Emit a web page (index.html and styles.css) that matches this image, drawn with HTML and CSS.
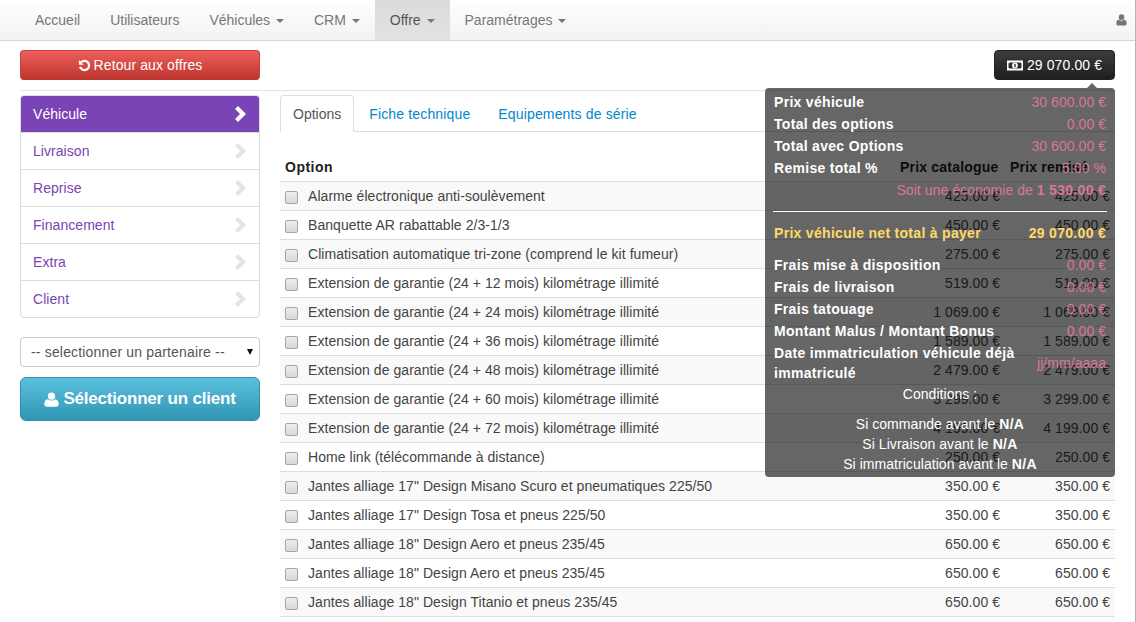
FILE: index.html
```html
<!DOCTYPE html>
<html lang="fr">
<head>
<meta charset="utf-8">
<title>Offre</title>
<link rel="stylesheet" href="styles.css">
</head>
<body>
<nav class="navbar">
  <ul class="nav-links">
    <li><a>Accueil</a></li>
    <li><a>Utilisateurs</a></li>
    <li><a>Véhicules <i class="caret"></i></a></li>
    <li><a>CRM <i class="caret"></i></a></li>
    <li class="active"><a>Offre <i class="caret"></i></a></li>
    <li><a>Paramétrages <i class="caret"></i></a></li>
  </ul>
  <svg class="user-icon" viewBox="0 0 12 13" width="11" height="12"><path fill="#777" d="M6 0.3a3 3 0 0 1 3 3.1 3 3 0 0 1-3 3.1 3 3 0 0 1-3-3.1 3 3 0 0 1 3-3.1zM3.2 6.3c.8.6 1.7 1 2.8 1s2-.4 2.8-1c1.9.1 2.9 1.7 2.9 4 0 1.4-.9 2.3-2.1 2.3H2.400c-1.200 0-2.100-.9-2.100-2.300 0-2.300 1-3.900 2.900-4z"/></svg>
</nav>
<main class="page">
  <div class="topbar">
    <a class="btn btn-red">
      <svg class="undo" viewBox="0 0 14 14" width="13" height="13"><path fill="none" stroke="#fff" stroke-width="2.400" d="M3.200 3.600A5 5 0 1 1 2.200 8.500"/><path fill="#fff" d="M1 1.200v5h5z"/></svg>
      Retour aux offres</a>
    <a class="btn btn-dark">
      <svg viewBox="0 0 16 11" width="16" height="11"><path fill="#fff" fill-rule="evenodd" d="M0 .5h16v10H0zM2.500 2.500 1.500 3.500v4l1 1h11l1-1v-4l-1-1z"/><circle cx="8" cy="5.500" r="2.900" fill="#fff"/><rect x="7.400" y="3.800" width="1.300" height="3.500" fill="#222"/></svg>
      29 070.00 €</a>
  </div>
  <hr class="rule">
  <div class="columns">
    <aside class="sidebar">
      <ul class="steps">
        <li class="on"><span>Véhicule</span><svg class="chev" viewBox="0 0 12 18" width="12" height="18"><path d="M2.500 2.500l6.500 6.500-6.500 6.500"/></svg></li>
        <li><span>Livraison</span><svg class="chev" viewBox="0 0 12 18" width="12" height="18"><path d="M2.500 2.500l6.500 6.500-6.500 6.500"/></svg></li>
        <li><span>Reprise</span><svg class="chev" viewBox="0 0 12 18" width="12" height="18"><path d="M2.500 2.500l6.500 6.500-6.500 6.500"/></svg></li>
        <li><span>Financement</span><svg class="chev" viewBox="0 0 12 18" width="12" height="18"><path d="M2.500 2.500l6.500 6.500-6.500 6.500"/></svg></li>
        <li><span>Extra</span><svg class="chev" viewBox="0 0 12 18" width="12" height="18"><path d="M2.500 2.500l6.500 6.500-6.500 6.500"/></svg></li>
        <li><span>Client</span><svg class="chev" viewBox="0 0 12 18" width="12" height="18"><path d="M2.500 2.500l6.500 6.500-6.500 6.500"/></svg></li>
      </ul>
      <div class="select"><span>-- selectionner un partenaire --</span><i class="select-arrow"></i></div>
      <a class="btn-client">
        <svg viewBox="0 0 15 15" width="15" height="15"><path fill="#fff" d="M7.500.6a3.600 3.600 0 0 1 3.600 3.600 3.600 3.600 0 0 1-7.200 0A3.600 3.600 0 0 1 7.500.6zM3.800 7.300c1 .8 2.300 1.200 3.700 1.200s2.700-.4 3.700-1.200c2.300.2 3.500 2.100 3.500 4.800 0 1.600-1 2.600-2.500 2.600H2.800c-1.500 0-2.500-1-2.500-2.600 0-2.700 1.200-4.600 3.500-4.800z"/></svg>
        Sélectionner un client</a>
    </aside>
    <section class="content">
      <ul class="tabs">
        <li class="on">Options</li>
        <li>Fiche technique</li>
        <li>Equipements de série</li>
      </ul>
      <table class="options">
        <thead><tr><th>Option</th><th class="num head">Prix catalogue</th><th class="num head">Prix remisé</th></tr></thead>
        <tbody>
          <tr><td><i class="check"></i>Alarme électronique anti-soulèvement</td><td class="num">425.00 €</td><td class="num">425.00 €</td></tr>
          <tr><td><i class="check"></i>Banquette AR rabattable 2/3-1/3</td><td class="num">450.00 €</td><td class="num">450.00 €</td></tr>
          <tr><td><i class="check"></i>Climatisation automatique tri-zone (comprend le kit fumeur)</td><td class="num">275.00 €</td><td class="num">275.00 €</td></tr>
          <tr><td><i class="check"></i>Extension de garantie (24 + 12 mois) kilométrage illimité</td><td class="num">519.00 €</td><td class="num">519.00 €</td></tr>
          <tr><td><i class="check"></i>Extension de garantie (24 + 24 mois) kilométrage illimité</td><td class="num">1 069.00 €</td><td class="num">1 069.00 €</td></tr>
          <tr><td><i class="check"></i>Extension de garantie (24 + 36 mois) kilométrage illimité</td><td class="num">1 589.00 €</td><td class="num">1 589.00 €</td></tr>
          <tr><td><i class="check"></i>Extension de garantie (24 + 48 mois) kilométrage illimité</td><td class="num">2 479.00 €</td><td class="num">2 479.00 €</td></tr>
          <tr><td><i class="check"></i>Extension de garantie (24 + 60 mois) kilométrage illimité</td><td class="num">3 299.00 €</td><td class="num">3 299.00 €</td></tr>
          <tr><td><i class="check"></i>Extension de garantie (24 + 72 mois) kilométrage illimité</td><td class="num">4 199.00 €</td><td class="num">4 199.00 €</td></tr>
          <tr><td><i class="check"></i>Home link (télécommande à distance)</td><td class="num">250.00 €</td><td class="num">250.00 €</td></tr>
          <tr><td><i class="check"></i>Jantes alliage 17" Design Misano Scuro et pneumatiques 225/50</td><td class="num">350.00 €</td><td class="num">350.00 €</td></tr>
          <tr><td><i class="check"></i>Jantes alliage 17" Design Tosa et pneus 225/50</td><td class="num">350.00 €</td><td class="num">350.00 €</td></tr>
          <tr><td><i class="check"></i>Jantes alliage 18" Design Aero et pneus 235/45</td><td class="num">650.00 €</td><td class="num">650.00 €</td></tr>
          <tr><td><i class="check"></i>Jantes alliage 18" Design Aero et pneus 235/45</td><td class="num">650.00 €</td><td class="num">650.00 €</td></tr>
          <tr><td><i class="check"></i>Jantes alliage 18" Design Titanio et pneus 235/45</td><td class="num">650.00 €</td><td class="num">650.00 €</td></tr>
        </tbody>
      </table>
    </section>
  </div>
  <div class="popover">
    <i class="popover-tip"></i>
    <div class="p-row"><b>Prix véhicule</b><span>30 600.00 €</span></div>
    <div class="p-row"><b>Total des options</b><span>0.00 €</span></div>
    <div class="p-row"><b>Total avec Options</b><span>30 600.00 €</span></div>
    <div class="p-row"><b>Remise total %</b><span>5.00 %</span></div>
    <div class="p-save">Soit une économie de <b>1 530.00 €</b></div>
    <hr class="p-rule">
    <div class="p-row p-total"><b>Prix véhicule net total à payer</b><b>29 070.00 €</b></div>
    <div class="p-fees">
      <div class="p-row"><b>Frais mise à disposition</b><span>0.00 €</span></div>
      <div class="p-row"><b>Frais de livraison</b><span>0.00 €</span></div>
      <div class="p-row"><b>Frais tatouage</b><span>0.00 €</span></div>
      <div class="p-row"><b>Montant Malus / Montant Bonus</b><span>0.00 €</span></div>
      <div class="p-row p-date"><b>Date immatriculation véhicule déjà immatriculé</b><span>jj/mm/aaaa</span></div>
    </div>
    <div class="p-cond">Conditions :</div>
    <div class="p-lines">
      <div>Si commande avant le <b>N/A</b></div>
      <div>Si Livraison avant le <b>N/A</b></div>
      <div>Si immatriculation avant le <b>N/A</b></div>
    </div>
  </div>
</main>
</body>
</html>
```
FILE: styles.css
```css
* { box-sizing: border-box; }
html, body { margin: 0; height: 622px; overflow: hidden; }
body { font: 14px/20px "Liberation Sans", Arial, sans-serif; letter-spacing: .05px; color: #444; background: #fff; border-right: 1px solid #b4b4b4; }
b, th { letter-spacing: .5px; }
ul { list-style: none; margin: 0; padding: 0; }
.navbar { height: 41px; display: flex; justify-content: space-between; align-items: center; padding: 0 8px 0 20px; background: linear-gradient(#fff, #f2f2f2); border-bottom: 1px solid #d5d5d5; }
.nav-links { display: flex; height: 40px; letter-spacing: 0; }
.nav-links a { display: block; padding: 10px 15px; color: #777; }
.nav-links .active { background: linear-gradient(#dbdbdb, #e2e2e2); }
.nav-links .active a { color: #555; }
.caret { display: inline-block; margin-left: 2px; vertical-align: middle; border-top: 4px solid #777; border-left: 4px solid transparent; border-right: 4px solid transparent; }
.user-icon { display: block; }
.page { position: relative; padding: 9px 20px 0 20px; }
.topbar { display: flex; justify-content: space-between; }
.btn { height: 30px; display: flex; align-items: center; justify-content: center; gap: 3px; border-radius: 4px; color: #fff; letter-spacing: .1px; }
.btn-red { width: 240px; background: linear-gradient(#ee5f5b, #bd362f); border: 1px solid #b8342e; border-color: #c9403a #c9403a #b8342e; }
.btn-dark { width: 121px; gap: 4px; background: linear-gradient(#3c3c3c, #1f1f1f); border: 1px solid #222; }
.rule { height: 1px; margin: 10px 0 4px; border: 0; background: #e3e3e3; }
.columns { display: flex; gap: 20px; }
.sidebar { width: 240px; flex: none; }
.steps { border: 1px solid #ddd; border-radius: 4px; overflow: hidden; }
.steps li { height: 37px; display: flex; align-items: center; justify-content: space-between; padding: 0 13px 0 12px; color: #7b44b3; border-top: 1px solid #ddd; }
.steps li:first-child { height: 36px; border-top: 0; }
.steps .on { background: #7a43b6; color: #fff; }
.chev { fill: none; stroke: #e4e4e4; stroke-width: 4.200; }
.on .chev { stroke: #fff; }
.select { height: 30px; margin-top: 19px; display: flex; align-items: center; justify-content: space-between; padding: 0 3px 0 10px; border: 1px solid #ccc; border-radius: 4px; color: #555; letter-spacing: .17px; }
.select-arrow { border-top: 6px solid #111; border-left: 3px solid transparent; border-right: 3px solid transparent; margin-right: 3px; }
.btn-client { height: 44px; margin-top: 10px; display: flex; align-items: center; justify-content: center; gap: 4px; border-radius: 6px; border: 1px solid #3a8ba8; color: #fff; font-size: 17px; font-weight: bold; letter-spacing: -.2px; background: linear-gradient(#5bc0de, #2f96b4); }
.content { flex: 1; min-width: 0; }
.tabs { display: flex; height: 37px; border-bottom: 1px solid #ddd; letter-spacing: .15px; }
.tabs li { padding: 9px 14px 7px; color: #08c; height: 37px; }
.tabs .on { padding: 8px 12px; margin-right: 1px; color: #555; background: #fff; border: 1px solid #ddd; border-bottom-color: #fff; border-radius: 4px 4px 0 0; letter-spacing: 0; }
.options { width: 100%; margin-top: 20px; border-collapse: collapse; }
.options th { text-align: left; padding: 5px 5px 4px; border-bottom: 1px solid #ddd; color: #222; }
.options .head { text-align: left; letter-spacing: .2px; }
.options td { height: 29px; padding: 4px 5px; border-bottom: 1px solid #ddd; }
.options tbody tr:nth-child(odd) td { background: #f9f9f9; }
.options .num { width: 110px; white-space: nowrap; }
.options td.num { text-align: right; }
.check { display: inline-block; width: 13px; height: 13px; margin-right: 10px; vertical-align: -3px; border: 1px solid #a6a6a6; border-radius: 2px; background: linear-gradient(#ededed, #d8d8d8); }
.popover { position: absolute; top: 47px; left: 765px; width: 350px; height: 389px; padding: 3px 9px; border-radius: 4px; background: rgba(0, 0, 0, .6); color: #fff; }
.popover b { letter-spacing: .3px; }
.popover-tip { position: absolute; top: -5px; right: 18px; border-bottom: 5px solid #666; border-left: 5px solid transparent; border-right: 5px solid transparent; }
.p-row { display: flex; justify-content: space-between; align-items: center; height: 22px; }
.p-row span { color: #d9769a; }
.p-save { color: #d9769a; text-align: right; height: 22px; line-height: 22px; }
.p-rule { margin: 10px -1px 10px; border: 0; height: 1px; background: #fff; }
.p-total { color: #ffd966; }
.p-fees { margin-top: 10px; }
.p-date { height: 42px; }
.p-date b { width: 270px; }
.p-cond { text-align: center; }
.p-lines { margin-top: 10px; text-align: center; }
```
